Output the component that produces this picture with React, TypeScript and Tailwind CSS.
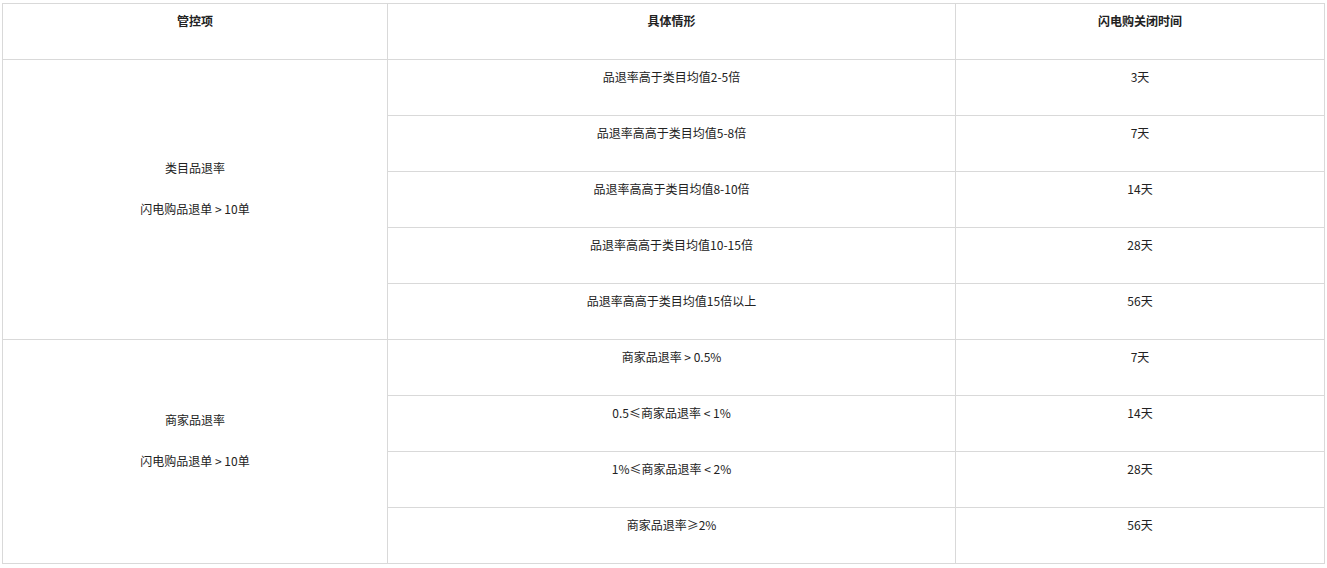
const GROUPS = [
  {
    title: "类目品退率",
    cond: "闪电购品退单 > 10单",
    pad: "pt-[99px]",
    rows: [
      ["品退率高于类目均值2-5倍", "3天"],
      ["品退率高高于类目均值5-8倍", "7天"],
      ["品退率高高于类目均值8-10倍", "14天"],
      ["品退率高高于类目均值10-15倍", "28天"],
      ["品退率高高于类目均值15倍以上", "56天"],
    ],
  },
  {
    title: "商家品退率",
    cond: "闪电购品退单 > 10单",
    pad: "pt-[71px]",
    rows: [
      ["商家品退率 > 0.5%", "7天"],
      ["0.5≤商家品退率 < 1%", "14天"],
      ["1%≤商家品退率 < 2%", "28天"],
      ["商家品退率≥2%", "56天"],
    ],
  },
];

const cell = "border border-[#d9d9d9] align-top pt-[8px] text-center leading-[18px]";

export default function App() {
  return (
    <div
      className="min-h-screen bg-white pl-[2px] pt-[3px] text-[12px] text-[#222]"
      style={{ fontFamily: '"Noto Sans CJK SC", "Liberation Sans", sans-serif' }}
    >
      <table className="w-[1322px] table-fixed border-collapse border border-[#b3b3b3]">
        <colgroup>
          <col className="w-[385px]" />
          <col className="w-[568px]" />
          <col className="w-[369px]" />
        </colgroup>
        <thead>
          <tr className="h-[56px]">
            <th className={`${cell} font-bold`}>管控项</th>
            <th className={`${cell} font-bold`}>具体情形</th>
            <th className={`${cell} font-bold`}>闪电购关闭时间</th>
          </tr>
        </thead>
        <tbody>
          {GROUPS.map((g) =>
            g.rows.map((r, i) => (
              <tr key={g.title + i} className="h-[56px]">
                {i === 0 && (
                  <td rowSpan={g.rows.length} className={`border border-[#d9d9d9] align-top text-center leading-[18px] ${g.pad}`}>
                    <p>{g.title}</p>
                    <p className="mt-[23px]">{g.cond}</p>
                  </td>
                )}
                <td className={cell}>{r[0]}</td>
                <td className={cell}>{r[1]}</td>
              </tr>
            ))
          )}
        </tbody>
      </table>
    </div>
  );
}
